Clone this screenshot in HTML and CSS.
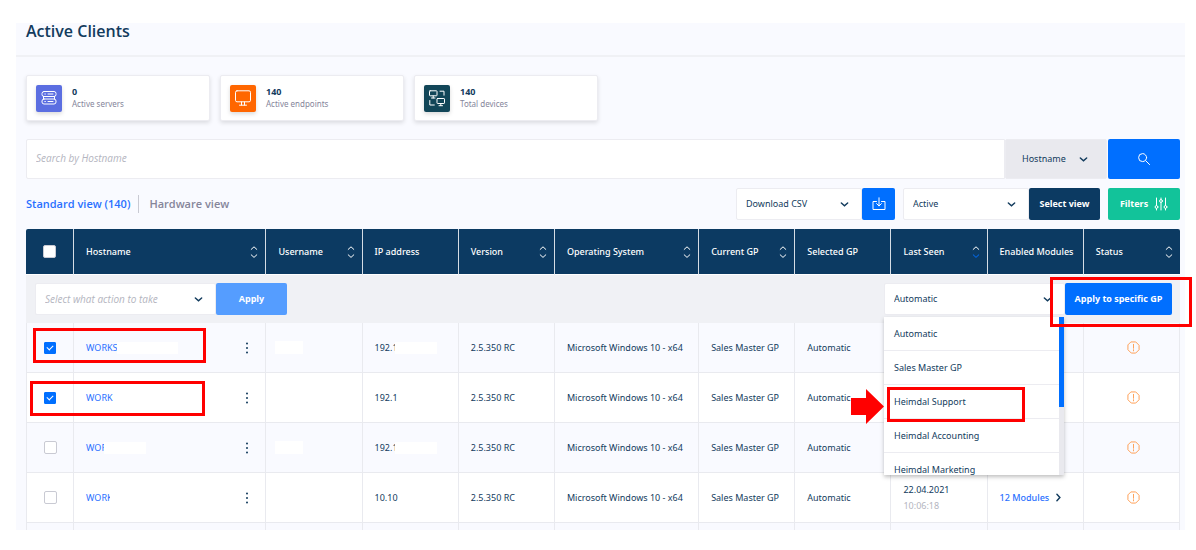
FILE: index.html
```html
<!DOCTYPE html>
<html lang="en">
<head>
    <meta charset="UTF-8">
    <meta name="viewport" content="width=device-width, initial-scale=1.0">
    <title>Active Clients</title>
    <link rel="stylesheet" href="styles.css">
</head>
<body>
    <!-- Shared icons -->
    <svg class="sprite" aria-hidden="true">
        <symbol id="chevron" viewBox="0 0 8 8"><path d="M1.2 2.6 4 5.2 6.8 2.6" /></symbol>
        <symbol id="sort" viewBox="0 0 8 14"><path d="M1.2 4.4 4 1.8 6.8 4.4" /><path class="sort-down" d="M1.2 9.8 4 12.4 6.8 9.8" /></symbol>
        <symbol id="dots" viewBox="0 0 4 14"><circle cx="2" cy="2.5" r="1" /><circle cx="2" cy="7" r="1" /><circle cx="2" cy="11.5" r="1" /></symbol>
        <symbol id="warning" viewBox="0 0 14 14"><path d="M4.6 1h4.8L13 4.6v4.8L9.4 13H4.6L1 9.4V4.6z" /><path d="M7 3.6v4.2M7 9.4v1.2" /></symbol>
    </svg>

    <main class="panel">
        <header class="page-header">
            <h1>Active Clients</h1>
        </header>

        <div class="content">
            <div class="cards">
                <div class="card">
                    <div class="card-icon servers">
                        <svg width="18" height="18" viewBox="0 0 18 18"><rect x="2" y="2.5" width="14" height="5" rx="2" /><rect x="2" y="10" width="14" height="5" rx="2" /><path d="M4.8 5h.6M8 5h5M4.8 12.5h.6M8 12.5h5M3.5 7.5v2.5M14.5 7.5v2.5" /></svg>
                    </div>
                    <div>
                        <strong>0</strong>
                        <span>Active servers</span>
                    </div>
                </div>
                <div class="card">
                    <div class="card-icon endpoints">
                        <svg width="18" height="18" viewBox="0 0 18 18"><rect x="1.5" y="1.8" width="15" height="11" rx="1.5" /><path d="M7.5 13v3M10.5 13v3M5.5 16.2h7" /></svg>
                    </div>
                    <div>
                        <strong>140</strong>
                        <span>Active endpoints</span>
                    </div>
                </div>
                <div class="card">
                    <div class="card-icon devices">
                        <svg width="18" height="18" viewBox="0 0 18 18"><rect x="1.5" y="1.8" width="7.5" height="5" rx=".6" /><path d="M5.2 7v2M3.5 9h3.5M12 2.2h4v4M1.8 11.5v4.5h4.5" /><rect x="9" y="9.5" width="7.5" height="5" rx=".6" /><path d="M12.8 14.5v2M11 16.7h3.5" /></svg>
                    </div>
                    <div>
                        <strong>140</strong>
                        <span>Total devices</span>
                    </div>
                </div>
            </div>

            <form class="search">
                <input type="search" aria-label="Search" placeholder="Search by Hostname">
                <div class="select search-field">
                    <select aria-label="Search field"><option>Hostname</option></select>
                    <svg><use href="#chevron" /></svg>
                </div>
                <button type="button" class="btn btn-search" aria-label="Search">
                    <svg width="14" height="14" viewBox="0 0 14 14"><circle cx="5.6" cy="5.6" r="4" /><path d="M8.6 8.6 12.6 12.6" /></svg>
                </button>
            </form>

            <div class="toolbar">
                <nav class="tabs">
                    <a href="#" class="active">Standard view (140)</a>
                    <a href="#">Hardware view</a>
                </nav>
                <div class="group">
                    <div class="select view-select">
                        <select aria-label="Export"><option>Download CSV</option></select>
                        <svg><use href="#chevron" /></svg>
                    </div>
                    <button type="button" class="btn btn-download" aria-label="Download">
                        <svg width="14" height="14" viewBox="0 0 14 14"><path d="M4.5 4.5H1v8h12v-8H9.5M7 .8v8M4.6 6.6 7 9l2.4-2.4" /></svg>
                    </button>
                </div>
                <div class="group">
                    <div class="select view-select">
                        <select aria-label="View"><option>Active</option></select>
                        <svg><use href="#chevron" /></svg>
                    </div>
                    <button type="button" class="btn btn-view">Select view</button>
                </div>
                <button type="button" class="btn btn-filters">
                    Filters
                    <svg width="14" height="14" viewBox="0 0 14 14"><path d="M2.5 1v7.5M2.5 11.5V13M7 1v1.5M7 5.5V13M11.5 1v7.5M11.5 11.5V13" /><circle cx="2.5" cy="10" r="1.4" /><circle cx="7" cy="4" r="1.4" /><circle cx="11.5" cy="10" r="1.4" /></svg>
                </button>
            </div>

            <table class="clients">
                <colgroup>
                    <col class="col-1"><col class="col-4"><col class="col-2"><col class="col-2"><col class="col-2"><col class="col-3">
                    <col class="col-2"><col class="col-2"><col class="col-2"><col class="col-2"><col class="col-2">
                </colgroup>
                <thead>
                    <tr>
                        <th class="check"><input type="checkbox" aria-label="Select all"></th>
                        <th><div class="head">Hostname <svg><use href="#sort" /></svg></div></th>
                        <th><div class="head">Username <svg><use href="#sort" /></svg></div></th>
                        <th><div class="head">IP address</div></th>
                        <th><div class="head">Version <svg><use href="#sort" /></svg></div></th>
                        <th><div class="head">Operating System <svg><use href="#sort" /></svg></div></th>
                        <th><div class="head">Current GP <svg><use href="#sort" /></svg></div></th>
                        <th><div class="head">Selected GP</div></th>
                        <th><div class="head">Last Seen <svg class="sorted"><use href="#sort" /></svg></div></th>
                        <th><div class="head">Enabled Modules</div></th>
                        <th><div class="head">Status <svg><use href="#sort" /></svg></div></th>
                    </tr>
                </thead>
                <tbody>
                    <tr class="actions">
                        <td colspan="11">
                            <div class="actions-bar">
                                <div class="group">
                                    <div class="select action-select placeholder">
                                        <select aria-label="Action"><option>Select what action to take</option></select>
                                        <svg><use href="#chevron" /></svg>
                                    </div>
                                    <button type="button" class="btn btn-apply">Apply</button>
                                </div>
                                <div class="group gp">
                                    <div class="select action-select">
                                        <select aria-label="Group policy"><option>Automatic</option></select>
                                        <svg><use href="#chevron" /></svg>
                                        <div class="menu">
                                            <ul>
                                                <li>Automatic</li>
                                                <li>Sales Master GP</li>
                                                <li>Heimdal Support</li>
                                                <li>Heimdal Accounting</li>
                                                <li>Heimdal Marketing</li>
                                            </ul>
                                            <div class="track"><div class="thumb"></div></div>
                                        </div>
                                        <div class="mark mark-option"></div>
                                        <svg class="arrow" viewBox="0 0 33 35"><path d="M0 9h15V0l18 17.5L15 35v-9H0z" /></svg>
                                    </div>
                                    <button type="button" class="btn btn-gp">Apply to specific GP</button>
                                    <div class="mark mark-apply"></div>
                                </div>
                            </div>
                        </td>
                    </tr>
                    <tr>
                        <td class="check"><input type="checkbox" aria-label="Select client" checked><div class="mark mark-first"></div></td>
                        <td><div class="host"><a href="#">WORKS</a><i class="mask wide"></i><button type="button" aria-label="More"><svg><use href="#dots" /></svg></button></div></td>
                        <td><i class="mask user"></i></td>
                        <td><div class="ip">192.1<i class="mask"></i></div></td>
                        <td>2.5.350 RC</td>
                        <td>Microsoft Windows 10 - x64</td>
                        <td>Sales Master GP</td>
                        <td>Automatic</td>
                        <td></td>
                        <td></td>
                        <td class="status"><svg><use href="#warning" /></svg></td>
                    </tr>
                    <tr>
                        <td class="check"><input type="checkbox" aria-label="Select client" checked><div class="mark mark-second"></div></td>
                        <td><div class="host"><a href="#">WORK</a><button type="button" aria-label="More"><svg><use href="#dots" /></svg></button></div></td>
                        <td></td>
                        <td>192.1</td>
                        <td>2.5.350 RC</td>
                        <td>Microsoft Windows 10 - x64</td>
                        <td>Sales Master GP</td>
                        <td>Automatic</td>
                        <td></td>
                        <td></td>
                        <td class="status"><svg><use href="#warning" /></svg></td>
                    </tr>
                    <tr>
                        <td class="check"><input type="checkbox" aria-label="Select client"></td>
                        <td><div class="host"><a href="#">WOR</a><i class="mask"></i><button type="button" aria-label="More"><svg><use href="#dots" /></svg></button></div></td>
                        <td><i class="mask user"></i></td>
                        <td><div class="ip">192.1<i class="mask"></i></div></td>
                        <td>2.5.350 RC</td>
                        <td>Microsoft Windows 10 - x64</td>
                        <td>Sales Master GP</td>
                        <td>Automatic</td>
                        <td></td>
                        <td></td>
                        <td class="status"><svg><use href="#warning" /></svg></td>
                    </tr>
                    <tr>
                        <td class="check"><input type="checkbox" aria-label="Select client"></td>
                        <td><div class="host"><a href="#">WORK</a><i class="mask"></i><button type="button" aria-label="More"><svg><use href="#dots" /></svg></button></div></td>
                        <td></td>
                        <td>10.10</td>
                        <td>2.5.350 RC</td>
                        <td>Microsoft Windows 10 - x64</td>
                        <td>Sales Master GP</td>
                        <td>Automatic</td>
                        <td><div class="seen">22.04.2021<small>10:06:18</small></div></td>
                        <td><a href="#" class="modules">12 Modules <svg><use href="#chevron" /></svg></a></td>
                        <td class="status"><svg><use href="#warning" /></svg></td>
                    </tr>
                    <tr class="peek">
                        <td></td><td></td><td></td><td></td><td></td><td></td><td></td><td></td><td></td><td></td><td></td>
                    </tr>
                </tbody>
            </table>
        </div>
    </main>
</body>
</html>
```
FILE: styles.css
```css
* {
    box-sizing: border-box;
}

body {
    margin: 0;
    padding: 23px 11px 20px 16px;
    background: #ffffff;
    font-family: "Open Sans", "Noto Sans", sans-serif;
    font-size: 9px;
    line-height: 12px;
    color: #123b5d;
}

a {
    color: #2970ff;
    text-decoration: none;
}

svg {
    fill: none;
    stroke: currentColor;
    stroke-linecap: round;
    flex: none;
}

input, select, button {
    font: inherit;
    color: inherit;
    margin: 0;
}

.sprite {
    position: absolute;
    width: 0;
    height: 0;
}

.panel {
    background: #f9faff;
}

.page-header {
    height: 34px;
    padding-left: 10px;
    border-bottom: 2px solid #f0f1f5;
}

h1 {
    margin: 0;
    font-size: 16px;
    line-height: 16px;
    font-weight: 600;
}

.content {
    padding: 18px 5px 0 10px;
}

/* Summary cards */
.cards {
    display: flex;
    gap: 10px;
    margin-bottom: 18px;
}

.card {
    display: flex;
    align-items: center;
    gap: 10px;
    width: 184px;
    height: 46px;
    padding: 0 9px;
    background: #ffffff;
    border: 1px solid #ececf1;
    border-radius: 2px;
    box-shadow: 0 2px 4px rgba(0, 0, 0, 0.12);
}

.card-icon {
    display: flex;
    align-items: center;
    justify-content: center;
    width: 26px;
    height: 27px;
    border-radius: 2px;
    color: #ffffff;
    box-shadow: 0 2px 4px rgba(0, 0, 0, 0.15);
}

.servers {
    background: #5b6ee1;
}

.endpoints {
    background: #ff6600;
}

.devices {
    background: #124658;
}

.card strong, .card span {
    display: block;
}

.card span {
    font-family: "Noto Sans", sans-serif;
    font-size: 8px;
    color: #85859a;
}

/* Buttons and selects */
.btn {
    display: flex;
    align-items: center;
    justify-content: center;
    height: 32px;
    padding: 0;
    border: 0;
    border-radius: 2px;
    background: #006fff;
    color: #ffffff;
    font-weight: 700;
    cursor: pointer;
}

.select {
    position: relative;
    height: 32px;
    background: #ffffff;
    border: 1px solid #ececf1;
    border-radius: 2px;
    font-family: "Noto Sans", sans-serif;
}

.select select {
    width: 100%;
    height: 100%;
    padding: 0 9px;
    border: 0;
    background: transparent;
    appearance: none;
}

.select > svg {
    position: absolute;
    right: 12px;
    top: 50%;
    width: 9px;
    height: 9px;
    margin-top: -4px;
    stroke-width: 1.3;
    pointer-events: none;
}

.group {
    display: flex;
}

.search {
    display: flex;
    height: 40px;
    margin-bottom: 9px;
}

.search input {
    flex: 1;
    padding: 0 9px;
    border: 1px solid #ececf1;
    border-radius: 2px 0 0 2px;
    background: #ffffff;
    outline: none;
}

.search input::placeholder {
    font-size: 10px;
    font-style: italic;
    color: #b4b5c0;
}

.search-field {
    width: 102px;
    height: 40px;
    background: #e9e9ee;
    margin-right: 1px;
}

.search-field select {
    padding-left: 16px;
}

.search-field > svg {
    right: 18px;
}

.btn-search {
    width: 72px;
    height: 40px;
}

.toolbar {
    display: flex;
    align-items: center;
    gap: 8px;
    margin-bottom: 9px;
}

.tabs {
    display: flex;
    flex: 1;
    font-size: 11px;
    line-height: 18px;
    font-weight: 600;
}

.tabs a {
    color: #85859a;
}

.tabs .active {
    padding-right: 8px;
    margin-right: 10px;
    border-right: 1px solid #c9cad3;
    color: #2970ff;
}

.view-select {
    width: 126px;
}

.btn-download {
    width: 33px;
}

.btn-view {
    width: 71px;
    background: #0c3a62;
}

.btn-filters {
    width: 72px;
    gap: 6px;
    background: #12c39a;
}

/* Clients table */
.clients {
    width: 100%;
    table-layout: fixed;
    border-collapse: separate;
    border-spacing: 0;
}

.col-1 {
    width: calc(100% / 24);
}

.col-2 {
    width: calc(100% / 12);
}

.col-3 {
    width: calc(100% / 8);
}

.col-4 {
    width: calc(100% / 6);
}

th {
    height: 46px;
    padding: 0 7px 0 12px;
    background: #0c3a62;
    border-right: 1px solid #d5dce5;
    border-bottom: 1px solid #ffffff;
    color: #ffffff;
    font-weight: 500;
    text-align: left;
    white-space: nowrap;
}

th:first-child {
    border-top-left-radius: 2px;
}

th:last-child {
    border-top-right-radius: 2px;
    border-right: 0;
}

.head {
    display: flex;
    align-items: center;
    justify-content: space-between;
    font-family: "Noto Sans", sans-serif;
}

.head svg {
    width: 8px;
    height: 14px;
}

.sorted {
    --down: #006fff;
}

.sort-down {
    stroke: var(--down, currentColor);
}

td {
    position: relative;
    height: 50px;
    padding: 0 7px 0 12px;
    border-right: 1px solid #e9eaef;
    border-bottom: 1px solid #e9eaef;
    font-family: "Noto Sans", sans-serif;
    white-space: nowrap;
}

td:first-child {
    border-left: 1px solid #e9eaef;
}

tbody tr:nth-child(odd) td {
    background: #ffffff;
}

tbody tr:nth-child(even) td {
    background: #f9faff;
}

th.check, td.check {
    padding: 0;
    text-align: center;
}

.check input {
    display: block;
    width: 13px;
    height: 13px;
    margin: 0 auto;
    appearance: none;
    background: #ffffff;
    border: 1px solid #c9cad3;
    border-radius: 2px;
}

.check input:checked {
    width: 12px;
    height: 12px;
    background: #006fff;
    border-color: #006fff;
    border-radius: 1px;
}

/* Tick inside a checked box */
.check input:checked::after {
    content: "";
    display: block;
    width: 5px;
    height: 3px;
    margin: 2px auto 0;
    border-left: 1px solid #ffffff;
    border-bottom: 1px solid #ffffff;
    transform: rotate(-45deg);
}

.host, .ip {
    display: flex;
    align-items: center;
}

.host button {
    display: flex;
    margin-left: auto;
    padding: 0 9px;
    border: 0;
    background: none;
}

.host svg {
    width: 4px;
    height: 14px;
    fill: currentColor;
    stroke: none;
}

.mask {
    width: 42px;
    height: 12px;
    margin-left: -3px;
    background: #ffffff;
}

.mask.wide {
    width: 61px;
    margin-left: -1px;
}

.mask.user {
    display: block;
    width: 28px;
    height: 13px;
}

.status {
    text-align: center;
}

.status svg {
    display: block;
    width: 13px;
    height: 13px;
    margin: 0 auto;
    color: #ff9a4d;
}

.seen small {
    display: block;
    margin-top: 4px;
    font-size: 9px;
    color: #b4b5c0;
}

.modules {
    display: flex;
    align-items: center;
    gap: 5px;
    font-weight: 500;
}

.modules svg {
    width: 9px;
    height: 9px;
    color: #123b5d;
    stroke-width: 1.3;
    transform: rotate(-90deg);
}

.peek td {
    height: 7px;
    border-bottom: 0;
}

/* Bulk actions row */
.clients .actions td {
    height: 48px;
    padding: 0 8px 0 9px;
    background: #f0f1f5;
    border: 0;
    z-index: 2;
}

.actions-bar {
    display: flex;
    justify-content: space-between;
}

.action-select {
    width: 181px;
}

.placeholder select {
    font-family: "Open Sans", "Noto Sans", sans-serif;
    font-size: 10px;
    font-style: italic;
    color: #b4b5c0;
}

.btn-apply {
    width: 71px;
    background: #559dff;
}

.actions .btn {
    font-family: "Open Sans", "Noto Sans", sans-serif;
}

.btn-gp {
    width: 107px;
}

.gp {
    position: relative;
}

.menu {
    position: absolute;
    top: 33px;
    left: -1px;
    display: flex;
    width: 180px;
    height: 158px;
    overflow: hidden;
    background: #ffffff;
    box-shadow: 0 2px 4px rgba(0, 0, 0, 0.25);
}

.menu ul {
    flex: 1;
    margin: 0;
    padding: 0;
    list-style: none;
}

.menu li {
    height: 34px;
    padding-left: 10px;
    line-height: 33px;
    border-bottom: 1px solid #ececf1;
}

.track {
    width: 5px;
    background: #e9e9ee;
}

.thumb {
    height: 90px;
    background: #006fff;
}

/* Red callouts */
.mark {
    position: absolute;
    z-index: 3;
    border: 3px solid #ff0000;
    pointer-events: none;
}

.mark-first {
    top: 5px;
    left: 6px;
    width: 173px;
    height: 35px;
}

.mark-second {
    top: 8px;
    left: 3px;
    width: 175px;
    height: 35px;
}

.mark-option {
    top: 103px;
    left: 2px;
    width: 138px;
    height: 35px;
}

.mark-apply {
    top: -6px;
    right: -20px;
    width: 142px;
    height: 50px;
}

.select > .arrow {
    top: 105px;
    right: auto;
    left: -34px;
    width: 33px;
    height: 35px;
    margin: 0;
    fill: #ff0000;
    stroke: none;
}
```
